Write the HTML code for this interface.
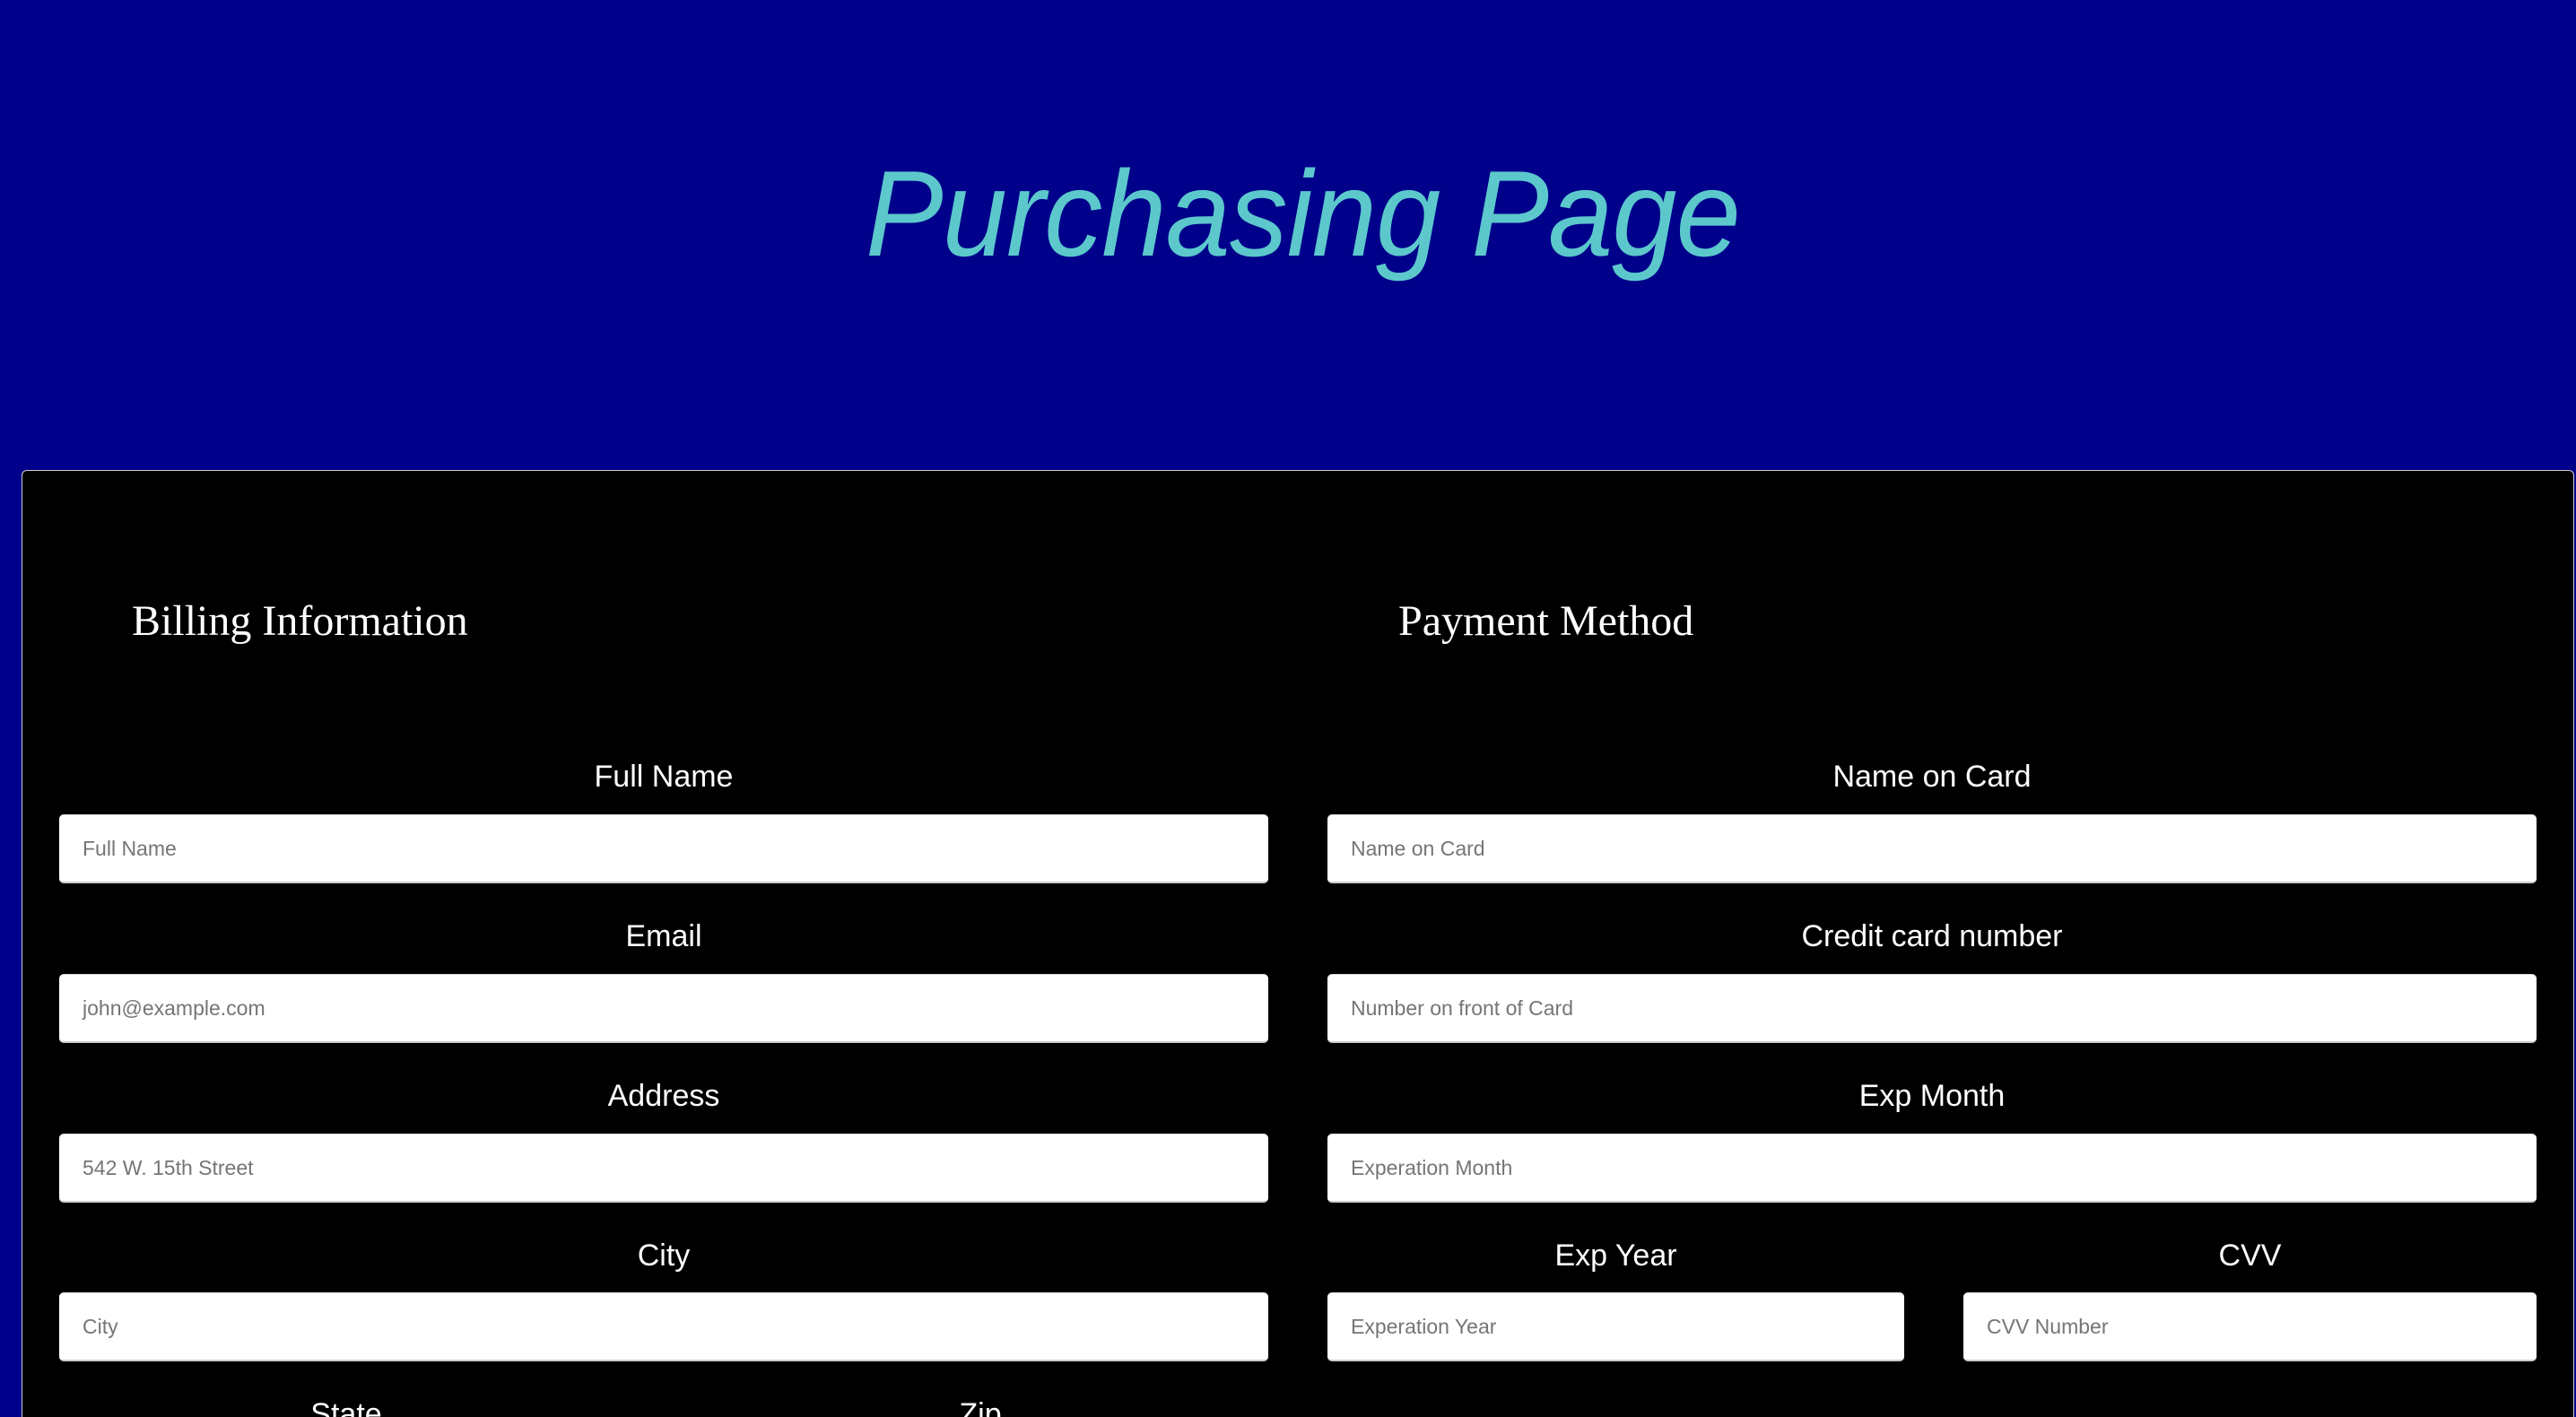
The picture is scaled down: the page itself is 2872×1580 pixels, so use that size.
<!DOCTYPE html>
<html><head><meta charset="utf-8"><style>
html,body{margin:0;padding:0;width:2872px;height:1580px;overflow:hidden;}
body{background:#00008b;position:relative;font-family:"Liberation Sans",Arial,sans-serif;}
.title{position:absolute;left:965px;top:138px;font-size:136px;line-height:200px;font-style:italic;color:#5cc8cc;white-space:nowrap;transform:scaleX(0.955);transform-origin:left top;letter-spacing:-1px;}
.panel{position:absolute;left:24px;top:524px;width:2846px;height:1056px;background:#000;border:1px solid #ccc;border-bottom:none;border-radius:6px 6px 0 0;box-sizing:border-box;}
.h{position:absolute;font-family:"Liberation Serif","Times New Roman",serif;color:#fff;font-size:48px;line-height:60px;white-space:nowrap;}
.lab{position:absolute;color:#fff;font-size:34px;line-height:40px;text-align:center;white-space:nowrap;}
.in{position:absolute;height:77px;background:#fff;border-radius:5px;box-sizing:border-box;border-bottom:2px solid #ccc;border-top:1px solid #ddd;color:#757575;font-size:23px;line-height:74px;padding-left:26px;}
</style></head><body>
<div class="title">Purchasing Page</div>
<div class="panel"></div>
<div class="h" style="left:147px;top:663px;">Billing Information</div>
<div class="h" style="left:1559px;top:663px;">Payment Method</div>

<div class="lab" style="left:66px;width:1348px;top:846px;">Full Name</div>
<div class="in" style="left:66px;width:1348px;top:908px;">Full Name</div>
<div class="lab" style="left:66px;width:1348px;top:1024px;">Email</div>
<div class="in" style="left:66px;width:1348px;top:1086px;">john@example.com</div>
<div class="lab" style="left:66px;width:1348px;top:1202px;">Address</div>
<div class="in" style="left:66px;width:1348px;top:1264px;">542 W. 15th Street</div>
<div class="lab" style="left:66px;width:1348px;top:1380px;">City</div>
<div class="in" style="left:66px;width:1348px;top:1441px;">City</div>
<div class="lab" style="left:286px;width:200px;top:1557px;">State</div>
<div class="lab" style="left:993px;width:200px;top:1557px;">Zip</div>

<div class="lab" style="left:1480px;width:1348px;top:846px;">Name on Card</div>
<div class="in" style="left:1480px;width:1348px;top:908px;">Name on Card</div>
<div class="lab" style="left:1480px;width:1348px;top:1024px;">Credit card number</div>
<div class="in" style="left:1480px;width:1348px;top:1086px;">Number on front of Card</div>
<div class="lab" style="left:1480px;width:1348px;top:1202px;">Exp Month</div>
<div class="in" style="left:1480px;width:1348px;top:1264px;">Experation Month</div>
<div class="lab" style="left:1480px;width:643px;top:1380px;">Exp Year</div>
<div class="in" style="left:1480px;width:643px;top:1441px;">Experation Year</div>
<div class="lab" style="left:2189px;width:639px;top:1380px;">CVV</div>
<div class="in" style="left:2189px;width:639px;top:1441px;">CVV Number</div>
</body></html>
